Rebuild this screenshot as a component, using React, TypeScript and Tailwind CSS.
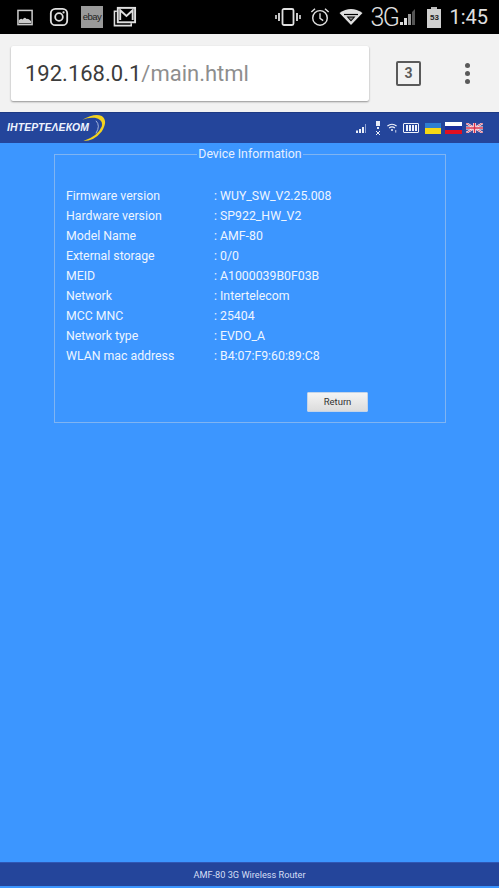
const rows: [string, string][] = [
  ["Firmware version", ": WUY_SW_V2.25.008"],
  ["Hardware version", ": SP922_HW_V2"],
  ["Model Name", ": AMF-80"],
  ["External storage", ": 0/0"],
  ["MEID", ": A1000039B0F03B"],
  ["Network", ": Intertelecom"],
  ["MCC MNC", ": 25404"],
  ["Network type", ": EVDO_A"],
  ["WLAN mac address", ": B4:07:F9:60:89:C8"],
];

function StatusBar() {
  return (
    <div className="h-[34px] bg-black flex items-center text-[#e0e0e0] shrink-0">
      <svg width="17" height="17" viewBox="0 0 18 18" className="ml-[17px]">
        <rect x="1" y="1.5" width="15" height="15" fill="none" stroke="#ccc" strokeWidth="1.6" />
        <path d="M2 15 V12 Q4 9 6 11 Q8 8 10 10.5 Q12 10 15 13 V15 Z" fill="#ccc" />
      </svg>
      <svg width="20" height="20" viewBox="0 0 22 22" className="ml-[15px]">
        <rect x="2" y="2" width="18" height="18" rx="5" fill="none" stroke="#e0e0e0" strokeWidth="2" />
        <circle cx="11" cy="11" r="4.2" fill="none" stroke="#e0e0e0" strokeWidth="2" />
        <circle cx="16" cy="6" r="1.2" fill="#e0e0e0" />
      </svg>
      <div className="ml-[12px] w-[22px] h-[22px] bg-[#9a9a9a] flex items-center justify-center text-[9.5px] text-[#222] font-['Liberation_Sans',sans-serif] tracking-[-0.5px]">
        ebay
      </div>
      <svg width="24" height="22" viewBox="0 0 25 22" className="ml-[10px]">
        <path d="M4 5 H1.5 V20 H19 V17.5" fill="none" stroke="#e0e0e0" strokeWidth="1.6" />
        <rect x="5" y="1.5" width="18" height="15" fill="none" stroke="#e0e0e0" strokeWidth="2" />
        <path d="M7.5 14 V4 L14 10 L20.5 4 V14" fill="none" stroke="#e0e0e0" strokeWidth="2" />
      </svg>
      <div className="flex-1" />
      <svg width="26" height="18" viewBox="0 0 26 18" className="mr-[9px]">
        <rect x="7.5" y="1" width="11" height="16" rx="1.5" fill="none" stroke="#e0e0e0" strokeWidth="1.8" />
        <path d="M4 5 V13 M22 5 V13" stroke="#e0e0e0" strokeWidth="1.8" />
        <path d="M1 7 V11 M25 7 V11" stroke="#e0e0e0" strokeWidth="1.6" />
      </svg>
      <svg width="20" height="20" viewBox="0 0 22 22" className="mr-[9px]">
        <circle cx="11" cy="12" r="8" fill="none" stroke="#e0e0e0" strokeWidth="1.6" />
        <path d="M11 7 V12.5 L14.5 15" fill="none" stroke="#e0e0e0" strokeWidth="1.5" />
        <path d="M1.5 5.5 L5.5 2 M20.5 5.5 L16.5 2" stroke="#e0e0e0" strokeWidth="1.6" />
      </svg>
      <svg width="24" height="18" viewBox="0 0 24 18" className="mr-[7px]">
        <path d="M12 17 L0.5 5 Q12 -3 23.5 5 Z" fill="#e0e0e0" />
        <path d="M12 13.5 L7.5 8.5 H16.5 Z" fill="#000" />
        <path d="M12 12 L9.5 9.5 H14.5 Z" fill="#888" />
        <path d="M5 6.5 H19" stroke="#000" strokeWidth="1.2" />
      </svg>
      <span className="font-['Roboto',sans-serif] font-light text-[25px] leading-none tracking-[-1.5px] text-[#e0e0e0]">3G</span>
      <svg width="18" height="18" viewBox="0 0 18 18" className="ml-[1px] mr-[10px]">
        <path d="M1 17 H4 V14 H1 Z" fill="#ddd" />
        <path d="M5 17 H8 V10 H5 Z" fill="#ddd" />
        <path d="M9 17 H12 V6 H9 Z" fill="#999" />
        <path d="M13 17 H16 V1 L13 4 Z" fill="#555" />
      </svg>
      <div className="w-[14px] h-[21px] mr-[8px] flex flex-col">
        <div className="w-[6px] h-[2px] bg-[#bbb] mx-auto" />
        <div className="flex-1 bg-[#d0d0d0] flex items-center justify-center text-[8px] text-[#222] font-bold font-['Liberation_Sans',sans-serif]">
          53
        </div>
      </div>
      <span className="font-['Roboto',sans-serif] text-[20px] leading-none mr-[11px] text-[#e0e0e0]">1:45</span>
    </div>
  );
}

function Toolbar() {
  return (
    <div className="h-[78px] bg-[#f2f2f2] flex items-center shrink-0 pl-[11px] font-['Roboto',sans-serif]">
      <div className="w-[358px] h-[55px] mt-[1px] bg-white rounded-[2px] shadow-[0_1px_2px_rgba(0,0,0,0.4)] flex items-center pl-[14px] text-[22px] leading-none">
        <span className="text-[#3c3c3c]">192.168.0.1</span>
        <span className="text-[#8e8e8e]">/main.html</span>
      </div>
      <div className="ml-[27px] w-[25px] h-[25px] border-[2px] border-[#5a5a5a] rounded-[2px] flex items-center justify-center text-[14px] font-bold text-[#5a5a5a]">
        3
      </div>
      <div className="ml-[44px] flex flex-col gap-[3px]">
        <div className="w-[5px] h-[5px] rounded-full bg-[#5a5a5a]" />
        <div className="w-[5px] h-[5px] rounded-full bg-[#5a5a5a]" />
        <div className="w-[5px] h-[5px] rounded-full bg-[#5a5a5a]" />
      </div>
    </div>
  );
}

function Banner() {
  return (
    <div className="h-[31px] bg-[#24459b] flex items-center shrink-0 border-t border-[#1d3a85]">
      <div className="ml-[7px] flex items-center h-[31px]">
        <span className="font-['Liberation_Sans',sans-serif] italic font-bold text-[10.4px] text-[#eef3ff] tracking-[0.15px]">ІНТЕРТЕΛЕКОМ</span>
        <svg width="30" height="29" viewBox="0 0 28 30" className="ml-[-10px]">
          <path d="M2 6 Q14 -1 22 2 Q29 7 22 18 Q14 28 3 28 Q18 23 22 13 Q24 6 15 4 Q9 3 2 6 Z" fill="#f2d21f" />
          <path d="M16 7 Q21 12 16 20" fill="none" stroke="#c9d4ee" strokeWidth="0.8" />
        </svg>
      </div>
      <div className="flex-1" />
      <svg width="12" height="10" viewBox="0 0 12 10" className="mr-[7px]">
        <path d="M0 7.5H2V10H0ZM3 6H5V10H3ZM6 4H8V10H6Z" fill="#e8edf8" />
        <path d="M9.5 1V10" stroke="#8fa3d4" strokeWidth="1" />
      </svg>
      <svg width="6" height="14" viewBox="0 0 6 14" className="mr-[6px]">
        <path d="M1 0H5V5H1ZM2 6H4V8H2Z" fill="#e8edf8" />
        <path d="M1 10L5 14M5 10L1 14" stroke="#e8edf8" strokeWidth="1" />
      </svg>
      <svg width="10" height="10" viewBox="0 0 12 11" className="mr-[6px]">
        <path d="M0.5 3Q6 -1 11.5 3M2.5 5.5Q6 3 9.5 5.5" fill="none" stroke="#f0f3fb" strokeWidth="1.4" />
        <circle cx="6" cy="8" r="1.2" fill="#f0f3fb" />
        <path d="M10.5 8V11" stroke="#f0f3fb" />
      </svg>
      <div className="w-[16px] h-[10px] border border-[#eef2fb] rounded-[1px] flex justify-end items-stretch gap-[1px] p-[1px] mr-[6px]">
        <div className="w-[2px] bg-[#eef2fb]" />
        <div className="w-[2px] bg-[#eef2fb]" />
        <div className="w-[2px] bg-[#eef2fb]" />
        <div className="w-[2px] bg-[#eef2fb]" />
      </div>
      <div className="w-[16px] h-[11px] flex flex-col mr-[4px]">
        <div className="flex-1 bg-[#2f7fd0]" />
        <div className="flex-1 bg-[#f5d816]" />
      </div>
      <div className="w-[17px] h-[12px] flex flex-col mr-[4px]">
        <div className="flex-1 bg-white" />
        <div className="flex-1 bg-[#1a2f9c]" />
        <div className="flex-1 bg-[#e01020]" />
      </div>
      <svg width="17" height="10" viewBox="0 0 17 10" className="mr-[16px]">
        <rect width="17" height="10" fill="#3d4a9a" />
        <path d="M0 0L17 10M17 0L0 10" stroke="#fff" strokeWidth="2" />
        <path d="M0 0L17 10M17 0L0 10" stroke="#d8304a" strokeWidth="0.8" />
        <path d="M8.5 0V10M0 5H17" stroke="#fff" strokeWidth="3" />
        <path d="M8.5 0V10M0 5H17" stroke="#d8304a" strokeWidth="1.6" />
      </svg>
    </div>
  );
}

export default function App() {
  return (
    <div className="w-[499px] h-[888px] flex flex-col bg-[#3c96ff] overflow-hidden font-['Roboto',sans-serif]">
      <StatusBar />
      <Toolbar />
      <Banner />
      <main className="flex-1 pt-[3px]">
        <fieldset className="ml-[54px] w-[392px] h-[277px] border border-[#7fb4f2]">
          <legend className="mx-auto px-[1px] pb-[2px] text-[12.3px] leading-[14px] text-[#e6f0ff]">
            <span className="block translate-y-[1px]">Device Information</span>
          </legend>
          <div className="mt-[24px] pl-[11px] flex flex-col">
            {rows.map(([label, value]) => (
              <div key={label} className="h-[20px] flex items-center text-[12.3px] text-[#eef5ff]">
                <span className="w-[148px]">{label}</span>
                <span>{value}</span>
              </div>
            ))}
          </div>
          <div className="mt-[26px] pl-[252px] flex">
            <button className="w-[61px] h-[20px] bg-gradient-to-b from-[#f4f4f4] to-[#dcdcdc] text-[9.5px] text-[#333] rounded-[1px] border border-[#c4d4e8]">
              Return
            </button>
          </div>
        </fieldset>
      </main>
      <footer className="h-[24px] mb-[2px] bg-[#24459b] flex items-center justify-center text-[9.2px] text-[#d5dff5] shrink-0 border-t border-[#2f57b5]">
        AMF-80 3G Wireless Router
      </footer>
    </div>
  );
}
